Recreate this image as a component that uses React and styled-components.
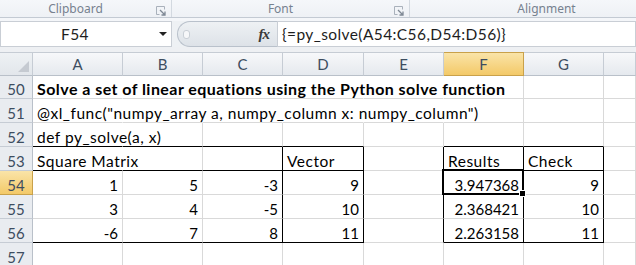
import React from 'react'
import styled, { createGlobalStyle, css } from 'styled-components'

const GlobalStyle = createGlobalStyle`
  html, body {
    margin: 0;
    padding: 0;
    background: #ffffff;
    overflow: hidden;
  }
  body {
    font-family: Lato, "Liberation Sans", sans-serif;
  }
`

const Ribbon = styled.div`
  display: flex;
  height: 17px;
  background: linear-gradient(#f5f7fa, #eef1f5);
  border-bottom: 1px solid #c3cad3;
`

const Group = styled.div`
  position: relative;
  flex: ${p => (p.$w ? `0 0 ${p.$w}px` : '1')};
  display: flex;
  align-items: center;
  justify-content: center;
  padding-right: ${p => (p.$launcher ? 20 : 0)}px;
  padding-left: ${p => p.$pl || 0}px;
  box-sizing: border-box;
  border-right: 1px solid ${p => (p.$w ? '#d3d9e0' : 'transparent')};
`

const GroupLabel = styled.span`
  font-family: "Noto Sans", "Open Sans", sans-serif;
  font-size: 12px;
  color: #76818f;
  line-height: 17px;
`

const Launcher = styled.svg`
  position: absolute;
  right: 5px;
  top: 6px;
`

const Strip = styled.div`
  height: 3px;
  background: #f4f6f9;
`

const FormulaBar = styled.div`
  display: flex;
  align-items: stretch;
  height: 26px;
  background: #eef1f4;
`

const NameBox = styled.div`
  position: relative;
  flex: 0 0 172px;
  box-sizing: border-box;
  background: #fff;
  border: 1px solid #c9ced5;
  display: flex;
  align-items: center;
  justify-content: center;
  padding-right: 22px;
  font-size: 15.5px;
  letter-spacing: 0.4px;
  color: #1d1d1d;
`

const Arrow = styled.span`
  position: absolute;
  right: 4px;
  top: 10px;
  width: 0;
  height: 0;
  border-left: 4px solid transparent;
  border-right: 4px solid transparent;
  border-top: 4px solid #222;
`

const Splitter = styled.div`
  flex: 0 0 100px;
  margin-left: 5px;
  box-sizing: border-box;
  border: 1px solid #b9c1cb;
  border-right: none;
  border-radius: 13px 0 0 13px;
  background: linear-gradient(#eef1f4, #dde2e8);
  display: flex;
  align-items: center;
  justify-content: space-between;
  padding: 0 8px 0 5px;
`

const Grip = styled.span`
  width: 5px;
  height: 7px;
  border-radius: 3px;
  background: #f6f7f9;
  border: 1px solid #c9cfd6;
`

const Fx = styled.span`
  font-family: "Liberation Serif", serif;
  font-style: italic;
  font-weight: bold;
  font-size: 15px;
  color: #3a3a3a;
  letter-spacing: -1px;
`

const FormulaInput = styled.div`
  flex: 1;
  box-sizing: border-box;
  background: #fff;
  border: 1px solid #c9ced5;
  display: flex;
  align-items: center;
  padding-left: 4px;
  font-size: 15.5px;
  letter-spacing: 0.4px;
  color: #1d1d1d;
  white-space: nowrap;
`

const Gap = styled.div`
  height: 5px;
  background: #eef0f3;
`

const Sheet = styled.div`
  display: grid;
  grid-template-columns: 33px 90px 80px 80px 81px 80px 80px 80px 1fr;
  grid-template-rows: 24px 23px repeat(7, 24px);
  background: #fff;
`

const headerSelected = css`
  background: linear-gradient(#fae4a8, #f3c968);
  border-color: #c9a14a;
`

const ColHead = styled.div`
  box-sizing: border-box;
  display: flex;
  align-items: center;
  justify-content: center;
  font-size: 15px;
  color: #3d4d60;
  background: linear-gradient(#f7f8fa, #e5e9ee);
  border-right: 1px solid #c6ccd4;
  border-bottom: 1px solid #b9c0c9;
  border-top: 1px solid #c6ccd4;
  ${p => p.$sel && headerSelected}
`

const Corner = styled(ColHead)`
  background: linear-gradient(#eef1f4, #e2e6eb);
  justify-content: flex-end;
  align-items: flex-end;
  padding: 0 3px 3px 0;
`

const RowHead = styled.div`
  box-sizing: border-box;
  display: flex;
  align-items: flex-end;
  justify-content: center;
  font-size: 15px;
  line-height: 18px;
  color: #3d4d60;
  background: #e9ecf0;
  border-right: 1px solid #b9c0c9;
  border-bottom: 1px solid #c6ccd4;
  ${p => p.$sel && headerSelected}
`

const Cell = styled.div`
  position: relative;
  box-sizing: border-box;
  display: flex;
  align-items: flex-end;
  justify-content: ${p => (p.$num ? 'flex-end' : 'flex-start')};
  padding: 0 4px;
  font-size: ${p => (p.$num ? 15 : p.$bold ? 16 : 15.5)}px;
  letter-spacing: ${p => (p.$num ? 0 : p.$bold ? 0.45 : 0.5)}px;
  line-height: 18px;
  font-weight: ${p => (p.$bold ? 700 : 400)};
  color: #000;
  white-space: nowrap;
  overflow: visible;
  border-right: 1px solid ${p => (p.$br ? '#000' : p.$spill ? 'transparent' : '#d9d9d9')};
  border-bottom: 1px solid ${p => (p.$bb ? '#000' : '#d9d9d9')};
`

const Selection = styled.div`
  position: absolute;
  top: -2px;
  left: -2px;
  right: -1px;
  bottom: -1px;
  border: 2px solid #000;
  box-shadow: inset 0 0 0 1px #fff;
  z-index: 2;
  pointer-events: none;
`

const FillHandle = styled.span`
  position: absolute;
  right: -4px;
  bottom: -4px;
  width: 5px;
  height: 5px;
  background: #000;
  border: 1px solid #fff;
`

const cols = ['A', 'B', 'C', 'D', 'E', 'F', 'G']

// which cells carry the black table borders
const boxB = { A: 1, B: 1, C: 1, D: 1, F: 1, G: 1 }
const boxR = { C: 1, D: 1, E: 1, F: 1, G: 1 }

const rows = [
  { n: 50, cells: { A: 'Solve a set of linear equations using the Python solve function' }, bold: true, spill: 'ABCDE' },
  { n: 51, cells: { A: '@xl_func("numpy_array a, numpy_column x: numpy_column")' }, spill: 'ABCDE' },
  { n: 52, cells: { A: 'def py_solve(a, x)' }, spill: 'A', bottom: true },
  { n: 53, cells: { A: 'Square Matrix', D: 'Vector', F: 'Results', G: 'Check' }, spill: 'A', bottom: true, right: true },
  { n: 54, cells: { A: '1', B: '5', C: '-3', D: '9', F: '3.947368', G: '9' }, num: true, right: true },
  { n: 55, cells: { A: '3', B: '4', C: '-5', D: '10', F: '2.368421', G: '10' }, num: true, right: true },
  { n: 56, cells: { A: '-6', B: '7', C: '8', D: '11', F: '2.263158', G: '11' }, num: true, right: true, bottom: true },
  { n: 57, cells: {} },
]

const LauncherIcon = () => (
  <Launcher width="10" height="10" viewBox="0 0 10 10">
    <path d="M0.5 0.5h8v3M0.5 0.5v8h3" fill="none" stroke="#a9b1bb" />
    <path d="M4 4l5 5M9 5.5v3.5h-3.5" fill="none" stroke="#7e8894" strokeWidth="1.3" />
  </Launcher>
)

export default function App() {
  return (
    <>
      <GlobalStyle />
      <Ribbon>
        <Group $w={172} $launcher>
          <GroupLabel>Clipboard</GroupLabel>
          <LauncherIcon />
        </Group>
        <Group $w={238} $launcher>
          <GroupLabel>Font</GroupLabel>
          <LauncherIcon />
        </Group>
        <Group $pl={48}>
          <GroupLabel>Alignment</GroupLabel>
        </Group>
      </Ribbon>
      <Strip />
      <FormulaBar>
        <NameBox>
          F54
          <Arrow />
        </NameBox>
        <Splitter>
          <Grip />
          <Fx>fx</Fx>
        </Splitter>
        <FormulaInput>{'{=py_solve(A54:C56,D54:D56)}'}</FormulaInput>
      </FormulaBar>
      <Gap />
      <Sheet>
        <Corner>
          <svg width="11" height="11" viewBox="0 0 11 11">
            <path d="M11 0V11H0Z" fill="#c5cad1" />
          </svg>
        </Corner>
        {cols.map(c => (
          <ColHead key={c} $sel={c === 'F'}>{c}</ColHead>
        ))}
        <ColHead />
        {rows.map(r => (
          <React.Fragment key={r.n}>
            <RowHead $sel={r.n === 54}>{r.n}</RowHead>
            {cols.map(c => (
              <Cell
                key={c}
                $num={r.num}
                $bold={r.bold}
                $spill={r.spill && r.spill.includes(c)}
                $bb={r.bottom && boxB[c]}
                $br={r.right && boxR[c]}
              >
                {r.cells[c] || ''}
                {r.n === 54 && c === 'F' && (
                  <Selection>
                    <FillHandle />
                  </Selection>
                )}
              </Cell>
            ))}
            <Cell />
          </React.Fragment>
        ))}
      </Sheet>
    </>
  )
}
